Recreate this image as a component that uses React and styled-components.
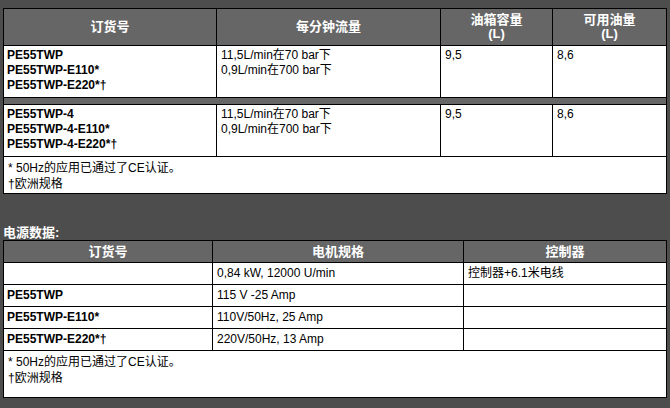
import React from "react";
import styled, { createGlobalStyle } from "styled-components";

const GlobalStyle = createGlobalStyle`
  html, body {
    margin: 0;
    padding: 0;
    background: #4d4d4d;
  }
  body {
    font-family: "Liberation Sans", Arial, "Noto Sans CJK SC", sans-serif;
    font-size: 12px;
  }
`;

const pumpRows = [
  {
    models: ["PE55TWP", "PE55TWP-E110*", "PE55TWP-E220*†"],
    flow: ["11,5L/min在70 bar下", "0,9L/min在700 bar下"],
    tank: "9,5",
    usable: "8,6",
  },
  {
    models: ["PE55TWP-4", "PE55TWP-4-E110*", "PE55TWP-4-E220*†"],
    flow: ["11,5L/min在70 bar下", "0,9L/min在700 bar下"],
    tank: "9,5",
    usable: "8,6",
  },
];

const powerRows = [
  { model: "", motor: "0,84 kW, 12000 U/min", ctrl: "控制器+6.1米电线" },
  { model: "PE55TWP", motor: "115 V -25 Amp", ctrl: "" },
  { model: "PE55TWP-E110*", motor: "110V/50Hz, 25 Amp", ctrl: "" },
  { model: "PE55TWP-E220*†", motor: "220V/50Hz, 13 Amp", ctrl: "" },
];

function Notes() {
  return (
    <>
      * 50Hz的应用已通过了CE认证。
      <br />†欧洲规格
    </>
  );
}

export default function App() {
  return (
    <Page>
      <GlobalStyle />
      <DataTable>
        <colgroup>
          <col style={{ width: 213 }} />
          <col style={{ width: 224 }} />
          <col style={{ width: 112 }} />
          <col style={{ width: 114 }} />
        </colgroup>
        <thead>
          <tr>
            <HeadCell $pad={4} $lh={14}>订货号</HeadCell>
            <HeadCell $pad={4} $lh={14}>每分钟流量</HeadCell>
            <HeadCell $pad={4} $lh={14}>
              油箱容量
              <br />
              (L)
            </HeadCell>
            <HeadCell $pad={4} $lh={14}>
              可用油量
              <br />
              (L)
            </HeadCell>
          </tr>
        </thead>
        <tbody>
          {pumpRows.map((r, i) => (
            <React.Fragment key={i}>
              {i > 0 && (
                <tr>
                  <GapCell colSpan={4} />
                </tr>
              )}
              <tr>
                <Cell $top>
                  {r.models.map((m) => (
                    <Model key={m}>{m}</Model>
                  ))}
                </Cell>
                <Cell $top>
                  {r.flow.map((f) => (
                    <Line key={f}>{f}</Line>
                  ))}
                </Cell>
                <Cell $top>{r.tank}</Cell>
                <Cell $top>{r.usable}</Cell>
              </tr>
            </React.Fragment>
          ))}
          <tr>
            <NoteCell colSpan={4} $bottom={1}>
              <Notes />
            </NoteCell>
          </tr>
        </tbody>
      </DataTable>

      <SectionTitle>电源数据:</SectionTitle>

      <DataTable>
        <colgroup>
          <col style={{ width: 209 }} />
          <col style={{ width: 251 }} />
          <col style={{ width: 203 }} />
        </colgroup>
        <thead>
          <tr>
            <HeadCell $pad={3} $lh={15}>订货号</HeadCell>
            <HeadCell $pad={3} $lh={15}>电机规格</HeadCell>
            <HeadCell $pad={3} $lh={15}>控制器</HeadCell>
          </tr>
        </thead>
        <tbody>
          {powerRows.map((r, i) => (
            <tr key={i}>
              <Cell>
                <Model>{r.model}</Model>
              </Cell>
              <Cell>{r.motor}</Cell>
              <Cell>{r.ctrl}</Cell>
            </tr>
          ))}
          <tr>
            <NoteCell colSpan={3} $bottom={11}>
              <Notes />
            </NoteCell>
          </tr>
        </tbody>
      </DataTable>
    </Page>
  );
}

const Page = styled.div`
  padding: 8px 0 0 3px;
`;

const DataTable = styled.table`
  width: 663px;
  table-layout: fixed;
  border-collapse: collapse;
  border: 1px solid #000;
`;

const HeadCell = styled.th`
  background: #666666;
  color: #ffffff;
  font-weight: bold;
  font-size: 13px;
  line-height: ${(p) => p.$lh}px;
  padding: ${(p) => p.$pad}px 4px;
  border: 1px solid #000;
  text-align: center;
  vertical-align: middle;
`;

const Cell = styled.td`
  background: #ffffff;
  color: #000;
  line-height: 15px;
  padding: ${(p) => (p.$top ? "2px 4px 4px" : "3px 4px")};
  border: 1px solid #000;
  vertical-align: ${(p) => (p.$top ? "top" : "middle")};
  white-space: nowrap;
`;

const Model = styled.div`
  font-weight: bold;
  margin-left: -1px;
`;

const Line = styled.div``;

const GapCell = styled.td`
  background: #666666;
  height: 6px;
  padding: 0;
  border: 1px solid #000;
`;

const NoteCell = styled.td`
  background: #ffffff;
  color: #000;
  line-height: 16px;
  padding: 3px 4px ${(p) => p.$bottom}px;
  border: 1px solid #000;
  vertical-align: top;
`;

const SectionTitle = styled.div`
  margin-top: 31px;
  color: #ffffff;
  font-weight: bold;
  font-size: 13px;
  line-height: 15px;
`;
